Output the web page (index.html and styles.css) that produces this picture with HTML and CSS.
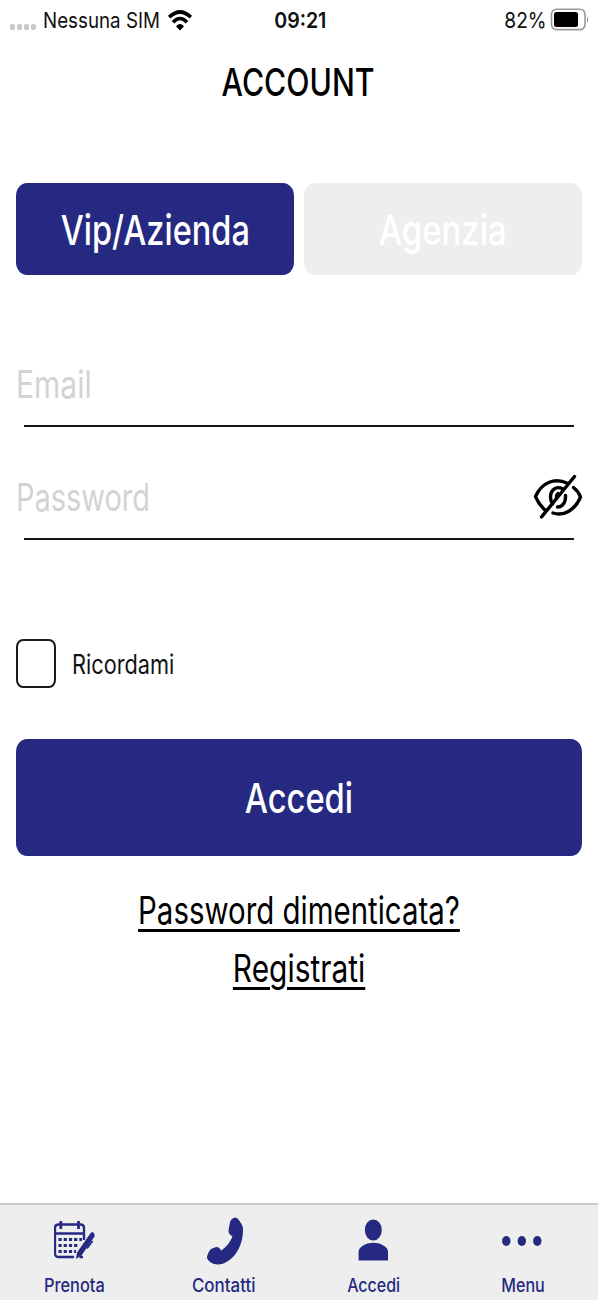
FILE: index.html
```html
<!DOCTYPE html>
<html lang="it">
<head>
<meta charset="utf-8">
<title>Account</title>
<link rel="stylesheet" href="styles.css">
</head>
<body>
<div class="screen">
  <div class="status">
    <div class="status-left">
      <span class="signal"><i></i><i></i><i></i><i></i></span>
      <span class="carrier"><span class="t k-carrier">Nessuna SIM</span></span>
      <svg class="wifi" width="24" height="22" viewBox="0 0 24 22" fill="none" stroke="#000" stroke-width="3.7">
        <path d="M1.2 7.2Q12-3.2 22.8 7.2"/>
        <path d="M5 12.2Q12 4.8 19 12.2"/>
        <path d="M8 16.2Q12 12 16 16.2L12 20.500Z" fill="#000" stroke="none"/>
      </svg>
    </div>
    <div class="clock"><span class="t k-clock">09:21</span></div>
    <div class="status-right">
      <span class="percent"><span class="t k-percent">82%</span></span>
      <svg width="40" height="24" viewBox="0 0 40 24">
        <rect x="1.500" y="1.200" width="33.500" height="20.400" rx="5" fill="#fff" stroke="#999" stroke-width="1.600"/>
        <rect x="4" y="4" width="24" height="15" rx="2.500" fill="#000"/>
        <path d="M37 8q2.400 3.500 0 7z" fill="#999"/>
      </svg>
    </div>
  </div>

  <h1 class="title"><span class="t k-title">ACCOUNT</span></h1>

  <div class="switch">
    <div class="switch-item active"><span class="t k-vip">Vip/Azienda</span></div>
    <div class="switch-item"><span class="t k-agenzia">Agenzia</span></div>
  </div>

  <div class="fields">
    <div class="field">
      <div class="field-row"><span class="t left k-email">Email</span></div>
      <div class="line"></div>
    </div>
    <div class="field">
      <div class="field-row">
        <span class="t left k-password">Password</span>
        <svg class="eye" width="50" height="46" viewBox="533 474 50 46" fill="none" stroke="#000" stroke-width="3.4" stroke-linecap="round" stroke-linejoin="round">
          <path d="M567.500 483.300C555 477.500 542 482 535.500 496.500Q539 505 546 511"/>
          <path d="M573.500 487.500Q578.500 491.500 580.500 497C575 510 564 516.500 553 513"/>
          <path d="M562.500 488.800C556 485.500 550.500 490 550.500 497Q550.500 501 552.500 504"/>
          <path d="M565.500 495.500C566 502 562.500 507 557.500 507"/>
          <path d="M556.500 499Q555 495 558 493" stroke-width="2.500"/>
          <path d="M574.500 476.500L541.500 517"/>
        </svg>
      </div>
      <div class="line"></div>
    </div>
  </div>

  <div class="remember">
    <span class="box"></span>
    <span class="t left k-ricordami">Ricordami</span>
  </div>

  <div class="submit"><span class="t k-submit">Accedi</span></div>

  <div class="links">
    <a class="t k-forgot">Password dimenticata?</a>
    <a class="t k-register">Registrati</a>
  </div>

  <nav class="tabs">
    <div class="tab">
      <svg width="42" height="46" viewBox="54 1219 42 46">
        <g fill="none" stroke="#262981" stroke-width="2.300">
          <path d="M74 1258H58.500Q55 1258 55 1254V1229Q55 1225.500 58.500 1225.500H80.500Q84 1225.500 84 1229V1241M55 1234.500H84M79.500 1258H83"/>
          <path d="M60.800 1222V1230M78.500 1222V1230" stroke-width="2.800"/>
          <path d="M58.500 1240.500H82M58.500 1246.500H79M58.500 1252.500H76" stroke-width="3" stroke-dasharray="3.200 2"/>
        </g>
        <path d="M91 1233.500Q95 1232.500 94.500 1237.500L81.500 1256.500 76 1260 77 1253.500Z" fill="#262981"/>
        <path d="M92.500 1242L87 1249.500" stroke="#262981" stroke-width="1.800"/>
      </svg>
      <span class="t k-prenota">Prenota</span>
    </div>
    <div class="tab">
      <svg width="40" height="50" viewBox="204 1215 40 50">
        <path d="M233.500 1217Q236 1215.500 238.500 1218.500L241.500 1223Q243 1225 243 1229C243 1248 231 1263 218 1263.500Q213 1263.500 209.500 1260.500Q206 1257.500 207.300 1254.500L209 1250.500Q210 1248.500 212 1247.500L216 1246Q218.500 1245.500 219.800 1247.500L221 1249.500Q228.500 1245 232.500 1235.500L230.500 1234Q228 1232 228.500 1229.500L230 1221Q230.500 1218.500 233.500 1217Z" fill="#262981"/>
      </svg>
      <span class="t k-contatti">Contatti</span>
    </div>
    <div class="tab">
      <svg width="32" height="44" viewBox="357 1219 32 44" fill="#262981">
        <ellipse cx="373.300" cy="1230" rx="8.500" ry="10.500"/>
        <path d="M358.600 1260.500V1251.500C358.600 1247.500 365 1242.700 373.300 1242.700S388 1247.500 388 1251.500V1260.500Z"/>
      </svg>
      <span class="t k-accedi">Accedi</span>
    </div>
    <div class="tab">
      <svg width="42" height="12" viewBox="0.700 0 42 12" fill="#262981">
        <ellipse cx="5" cy="6" rx="4.200" ry="5"/>
        <ellipse cx="20.500" cy="6" rx="4.200" ry="5"/>
        <ellipse cx="36" cy="6" rx="4.200" ry="5"/>
      </svg>
      <span class="t k-menu">Menu</span>
    </div>
  </nav>
</div>
</body>
</html>
```
FILE: styles.css
```css
* { box-sizing: border-box; }
body {
  margin: 0;
  background: #fff;
  color: #000;
  font-family: Inter, "Liberation Sans", sans-serif;
}
.screen {
  width: 598px;
  height: 1300px;
  display: flex;
  flex-direction: column;
  overflow: hidden;
}

/* condensed lettering */
.t {
  display: inline-block;
  white-space: nowrap;
  transform: scaleX(var(--k));
}
.left { transform-origin: 0 50%; }
.k-carrier { --k: .853; transform-origin: 0 50%; }
.k-clock { --k: .89; }
.k-percent { --k: .869; transform-origin: 100% 50%; }
.k-title { --k: .796; }
.k-vip { --k: .793; }
.k-agenzia { --k: .802; }
.k-email { --k: .8; }
.k-password { --k: .772; }
.k-ricordami { --k: .82; }
.k-submit { --k: .797; }
.k-forgot { --k: .785; }
.k-register { --k: .797; }
.k-prenota { --k: .885; }
.k-contatti { --k: .915; }
.k-accedi { --k: .865; }
.k-menu { --k: .87; }

.status {
  height: 41px;
  padding: 0 8px 0 10px;
  display: grid;
  grid-template-columns: 1fr 58px 1fr;
  align-items: center;
  font-size: 22px;
  line-height: 41px;
  color: #111;
}
.status-left, .status-right { display: flex; align-items: center; }
.status-right { justify-content: flex-end; gap: 3px; }
.status-right svg { margin-top: -2px; }
.signal { display: flex; gap: 2px; padding-top: 13px; }
.signal i { width: 5px; height: 6px; border-radius: 2px; background: #c8c8c8; }
.carrier { width: 125px; margin-left: 7px; }
.clock { font-weight: 600; text-align: center; }

.title {
  margin: 0;
  height: 82px;
  padding-right: 2px;
  line-height: 82px;
  font-size: 38px;
  font-weight: 550;
  text-align: center;
}

.switch {
  margin: 60px 16px 0;
  display: grid;
  grid-template-columns: 1fr 1fr;
  gap: 10px;
}
.switch-item {
  height: 92px;
  border-radius: 11px / 13px;
  background: #eee;
  color: #fff;
  font-size: 41px;
  font-weight: 550;
  line-height: 94px;
  text-align: center;
}
.active { background: #262981; }

.fields {
  margin: 70px 16px 0;
  display: flex;
  flex-direction: column;
  gap: 31px;
}
.field-row {
  height: 80px;
  padding-bottom: 2px;
  display: flex;
  align-items: center;
  justify-content: space-between;
  font-size: 37.5px;
  color: #d3d3d3;
}
.eye { margin-right: -1px; }
.line { height: 2px; margin: 0 8px; background: #151515; }

.remember {
  margin: 99px 16px 0;
  height: 49px;
  display: flex;
  align-items: center;
  gap: 15.5px;
  font-size: 26.5px;
  color: #111;
}
.box {
  width: 40px;
  height: 49px;
  border: 2px solid #1a1a1a;
  border-radius: 7px / 8px;
}

.submit {
  margin: 51px 16px 0;
  height: 117px;
  border-radius: 11px / 13px;
  background: #262981;
  color: #fff;
  font-size: 41px;
  font-weight: 550;
  line-height: 118px;
  text-align: center;
}

.links {
  margin-top: 26px;
  display: flex;
  flex-direction: column;
  align-items: center;
  font-size: 37.5px;
  line-height: 58px;
}
.links a {
  text-decoration: underline;
  text-decoration-thickness: 3px;
  text-underline-offset: 5px;
}

.tabs {
  margin-top: auto;
  height: 97px;
  border-top: 2px solid #c8c8ca;
  background: #eee;
  display: grid;
  grid-template-columns: repeat(4, 149.3px);
}
.tab {
  display: grid;
  grid-template-rows: 72px 16px;
  align-content: start;
  place-items: center;
  color: #262981;
  font-size: 18.5px;
  font-weight: 500;
  line-height: 16px;
}
```
